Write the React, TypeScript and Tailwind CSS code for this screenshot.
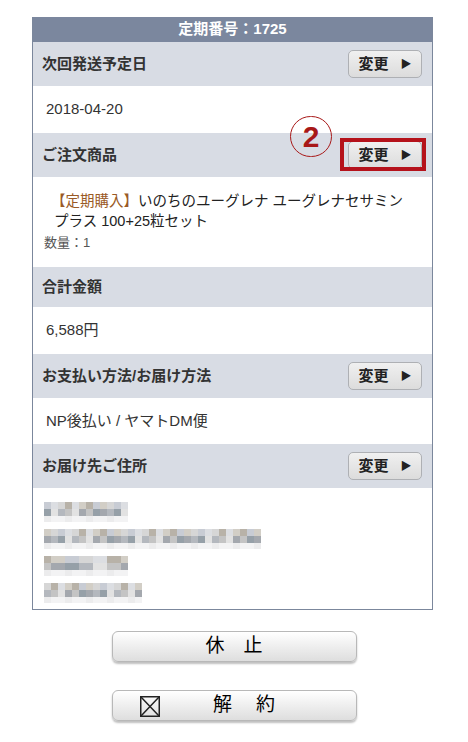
import { Fragment } from "react";

const font = "font-['Liberation_Sans','Noto_Sans_CJK_JP',sans-serif]";

const mosaicShades = [
  "bg-[#d6d6d6]",
  "bg-[#c4c4c4]",
  "bg-[#d2cec6]",
  "bg-[#b4b8be]",
  "bg-[#dcdee2]",
  "bg-[#a4a8ae]",
  "bg-[#c8ccd4]",
  "bg-[#e2e2e2]",
  "bg-[#b8b2a8]",
  "bg-[#96a0a8]",
];

function ChangeButton() {
  return (
    <button
      type="button"
      className="flex h-[28px] w-[74px] items-center justify-center gap-[12px] rounded-[5px] border border-[#aeb0b4] bg-gradient-to-b from-[#f0f0f0] to-[#dcdcdc] text-[15px] font-bold text-[#222]"
    >
      <span>変更</span>
      <span className="text-[11px]">▶</span>
    </button>
  );
}

function SectionHead({ label, action, tall = true }: { label: string; action?: boolean; tall?: boolean }) {
  return (
    <div
      className={`flex items-center justify-between bg-[#d8dce4] pl-[9px] pr-[10px] ${tall ? "h-[44px]" : "h-[40px]"}`}
    >
      <span className="text-[15px] font-bold text-[#333]">{label}</span>
      {action && <ChangeButton />}
    </div>
  );
}

function Mosaic({ cells, seed }: { cells: number; seed: number }) {
  return (
    <div className="flex flex-col">
      {[0, 1, 2].map((r) => (
        <div key={r} className="flex">
          {Array.from({ length: cells }).map((_, c) => {
            const v = (c * 7 + r * 13 + seed * 5 + ((c * c + seed) % 4)) % mosaicShades.length;
            const cls = r === 2 ? (c % 3 === 0 ? "bg-[#ececed]" : "bg-[#f3f3f4]") : mosaicShades[v];
            return <div key={c} className={`w-[7px] ${cls} ${r === 2 ? "h-[6px]" : "h-[7px]"}`} />;
          })}
        </div>
      ))}
    </div>
  );
}

export default function App() {
  return (
    <div className={`${font} min-h-[742px] w-[468px] bg-white pt-[17px]`}>
      <div className="relative ml-[32px] w-[401px] border border-t-0 border-[#7b879c]">
        <div className="flex h-[25px] items-center justify-center bg-[#7b879e] text-[15px] font-bold text-white">
          定期番号：1725
        </div>

        <SectionHead label="次回発送予定日" action />
        <div className="flex h-[47px] items-center px-[13px] text-[15px] text-[#333]">2018-04-20</div>

        <div className="relative">
          <SectionHead label="ご注文商品" action />
          <div className="pointer-events-none absolute left-[257px] top-[-17px] flex h-[41px] w-[42px] items-center justify-center rounded-full border-[1.5px] border-[#a81818] text-[30px] leading-none font-bold text-[#a81818]">
            2
          </div>
          <div className="pointer-events-none absolute right-[6px] top-[5px] h-[33px] w-[86px] border-[4px] border-[#b5121b]" />
        </div>
        <div className="flex h-[90px] flex-col justify-center pl-[11px]">
          <p className="pl-[7px] text-[14.5px] leading-[20px] text-[#222]">
            <span className="text-[#9a5a26]">【定期購入】</span>いのちのユーグレナ ユーグレナセサミン
            <br />
            <span className="pl-[3px]">プラス 100+25粒セット</span>
          </p>
          <p className="mt-[2px] text-[13px] text-[#555]">数量：1</p>
        </div>

        <SectionHead label="合計金額" tall={false} />
        <div className="flex h-[47px] items-center px-[13px] text-[15px] text-[#333]">6,588円</div>

        <SectionHead label="お支払い方法/お届け方法" action />
        <div className="flex h-[46px] items-center px-[13px] text-[15px] text-[#333]">NP後払い / ヤマトDM便</div>

        <SectionHead label="お届け先ご住所" action />
        <div className="flex h-[121px] flex-col gap-[7px] px-[11px] pt-[14px]">
          {[
            { cells: 12, seed: 1 },
            { cells: 31, seed: 2 },
            { cells: 12, seed: 3 },
            { cells: 14, seed: 4 },
          ].map((l, i) => (
            <Fragment key={i}>
              <Mosaic cells={l.cells} seed={l.seed} />
            </Fragment>
          ))}
        </div>
      </div>

      <div className="mt-[21px] flex flex-col items-center gap-[28px]">
        <button
          type="button"
          className="flex h-[31px] w-[245px] items-center justify-center rounded-[6px] border border-[#b8b8b8] bg-gradient-to-b from-white to-[#dedede] text-[19px] text-black shadow-[0_2px_2px_rgba(0,0,0,0.25)]"
        >
          <span>休</span>
          <span className="ml-[19px]">止</span>
        </button>
        <button
          type="button"
          className="relative flex h-[31px] w-[245px] items-center justify-center rounded-[6px] border border-[#b8b8b8] bg-gradient-to-b from-white to-[#dedede] pl-[20px] text-[19px] text-black shadow-[0_2px_2px_rgba(0,0,0,0.25)]"
        >
          <svg className="absolute left-[27px] top-[5px]" width="20" height="21" viewBox="0 0 20 21" fill="none">
            <rect x="0.75" y="0.75" width="18.5" height="19.5" stroke="#222" strokeWidth="1.5" />
            <path d="M1 1 L19 20 M19 1 L1 20" stroke="#222" strokeWidth="1.5" />
          </svg>
          <span>解</span>
          <span className="ml-[24px]">約</span>
        </button>
      </div>
    </div>
  );
}
